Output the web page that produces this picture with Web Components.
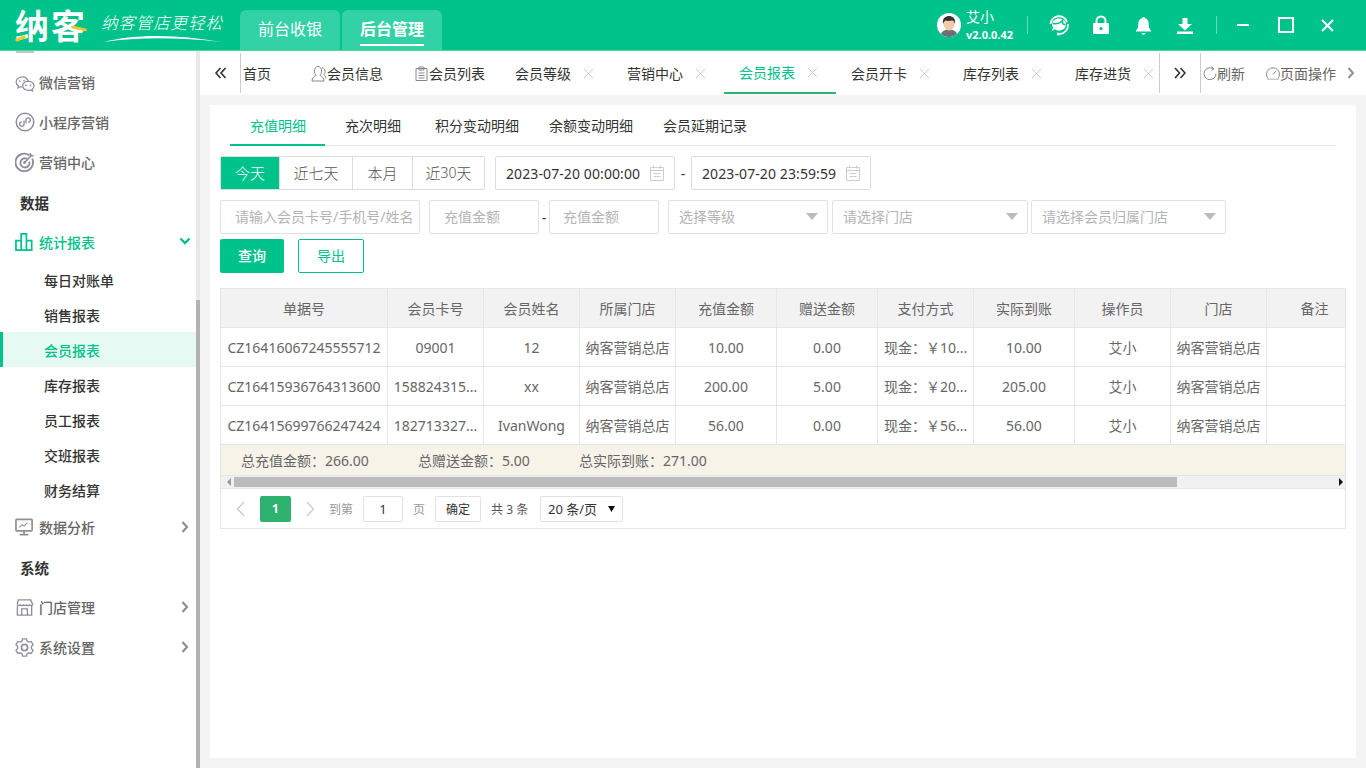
<!DOCTYPE html>
<html lang="zh-CN">
<head>
<meta charset="utf-8">
<title>纳客</title>
<style>
  html, body { margin: 0; height: 100%; overflow: hidden; background: #fff; }
  body { font-family: "Noto Sans", "Noto Sans CJK SC", sans-serif; font-size: 14px; }
</style>
</head>
<body>
<app-shell>
  <app-header slot="header"></app-header>
  <side-nav slot="side">
    <side-item icon="wechat">微信营销</side-item>
    <side-item icon="mini">小程序营销</side-item>
    <side-item icon="target">营销中心</side-item>
    <side-title>数据</side-title>
    <side-item icon="chart" open>统计报表</side-item>
    <side-sub>每日对账单</side-sub>
    <side-sub>销售报表</side-sub>
    <side-sub active>会员报表</side-sub>
    <side-sub>库存报表</side-sub>
    <side-sub>员工报表</side-sub>
    <side-sub>交班报表</side-sub>
    <side-sub>财务结算</side-sub>
    <side-item icon="monitor" arrow>数据分析</side-item>
    <side-title>系统</side-title>
    <side-item icon="store" arrow>门店管理</side-item>
    <side-item icon="gear" arrow>系统设置</side-item>
  </side-nav>
  <tab-strip slot="tabs"></tab-strip>
  <report-panel slot="main"></report-panel>
</app-shell>

<script>
const GREEN = '#00c28b';

const ICONS = {
  wechat: '<path d="M14 10.500c-.6-3.600-3-5.500-6.200-5.500C4.200 5 1.200 7.400 1.200 10.400c0 1.800 1 3.300 2.500 4.300l-.6 2 2.500-1.200c.8.200 1.500.3 2.300.3" /><path d="M14 9.500c3.300 0 6 2.200 6 5 0 1.500-.8 2.800-2 3.700l.5 1.800-2.300-1.100c-.8.200-1.400.4-2.200.4-3.300 0-6-2.200-6-4.800s2.700-5 6-5z"/><circle cx="11.500" cy="14" r="1" fill="currentColor" stroke="none"/><circle cx="16.200" cy="14" r="1" fill="currentColor" stroke="none"/><circle cx="5" cy="9.500" r=".9" fill="currentColor" stroke="none"/><circle cx="9.500" cy="9" r=".9" fill="currentColor" stroke="none"/>',
  mini: '<circle cx="10.500" cy="10.500" r="9.200" stroke-width="1.600"/><path d="M9.500 8.800v3.800a2.300 2.300 0 1 1-2.300-2.300M11.500 12.200V8.400a2.300 2.300 0 1 1 2.300 2.300" stroke-width="1.400"/>',
  target: '<path d="M14.800 3.300A9.200 9.200 0 1 0 18 7" stroke-width="2"/><path d="M12.800 7.300a4.800 4.800 0 1 0 2.200 2.800" stroke-width="2"/><circle cx="10" cy="11" r="1.600" fill="currentColor" stroke="none"/><path d="M10 11 18 3M16 1v3h3.500" stroke-width="1.600"/>',
  chart: '<path d="M1 9h5.500v10H1zM6.500 2h5.500v17H6.500zM12 9h5.500v10H12z" stroke-width="1.800"/>',
  monitor: '<rect x="1" y="2.500" width="17" height="12" rx=".8" stroke-width="1.800"/><path d="M4.500 11l3-3 2 1.500 3.500-3.500" stroke-width="1.100"/><path d="M9.500 14.500v3.500M5 18.500h9" stroke-width="1.800"/>',
  store: '<path d="M3.500 3h13l2 4.500c0 2-3 2-3 0 0 2-3.300 2-3.300 0 0 2-3.400 2-3.400 0 0 2-3.300 2-3.300 0 0 2-3 2-3 0z" stroke-width="1.400"/><path d="M2.500 9.500V19h15V9.500M7 19V12.500h6V19" stroke-width="1.400"/>',
  gear: '<path d="M8 2h4l.7 2.400 1.900 1 2.400-.7 2 3.400-1.800 1.800v2.200l1.800 1.800-2 3.400-2.400-.7-1.900 1-.7 2.400H8l-.7-2.400-1.900-1-2.400.7-2-3.400 1.800-1.800V9.900L1 8.100l2-3.400 2.400.7 1.900-1z" stroke-width="1.400"/><circle cx="10" cy="11" r="3.200" stroke-width="1.800"/>',
};

function svg(d, w, h, vb, extra) {
  return `<svg width="${w}" height="${h}" viewBox="${vb}" ${extra || ''}>${d}</svg>`;
}

class Base extends HTMLElement {
  constructor() {
    super();
    this.attachShadow({ mode: 'open' });
    this.shadowRoot.innerHTML = this.render();
  }
}

class AppShell extends Base {
  render() { return `
    <style>
      :host { display: grid; width: 1366px; height: 768px; overflow: hidden;
        grid-template: 51px 44px 1fr / 200px 1fr; }
      .h { grid-column: 1 / 3; display: block; }
      .s { grid-row: 2 / 4; display: block; }
    </style>
    <slot class="h" name="header"></slot>
    <slot class="s" name="side"></slot>
    <slot name="tabs"></slot>
    <slot name="main"></slot>`; }
}

class AppHeader extends Base {
  render() { return `
    <style>
      :host { display: flex; align-items: stretch; height: 51px; box-sizing: border-box;
        background: ${GREEN}; border-bottom: 1px solid #4fdb92; color: #fff; }
      .logo { position: relative; width: 86px; margin-left: 15px; font-size: 34px; font-weight: 700;
        line-height: 52px; letter-spacing: 2px; white-space: nowrap; }
      .logo i { position: absolute; left: 0; top: 37px; width: 11px; height: 3px; background: #f7c531;
        border-radius: 2px; transform: rotate(-22deg); }
      .logo b { position: absolute; left: 56px; top: 27px; width: 16px; height: 3px; background: #f7c531;
        border-radius: 2px; transform: rotate(12deg); }
      .slogan { position: relative; width: 124px; flex: none; font-size: 16.500px; font-style: italic;
        font-weight: 300; line-height: 46px; white-space: nowrap; letter-spacing: .9px; }
      .slogan svg { position: absolute; left: 2px; top: 33px; }
      .top { width: 100px; margin-top: 10px; background: #33d2a6; border-radius: 6px 6px 0 0; margin-left: 2px;
        text-align: center; font-size: 16px; line-height: 39px; }
      .first { margin-left: 15px; }
      .top span { display: inline-block; height: 33px; line-height: 37px; }
      .top.on { font-weight: 700; }
      .top.on span { border-bottom: 2px solid #fff; }
      .right { margin-left: auto; display: flex; align-items: center; }
      .avatar { width: 24px; height: 24px; margin-left: 1px; margin-right: 5px; }
      .user { width: 61px; line-height: 1; padding-top: 2px; }
      .user div { font-size: 14px; }
      .user small { display: block; margin-top: 3px; font: 700 11px "Noto Sans", sans-serif; }
      .sep { width: 1px; height: 18px; background: #66dabb; }
      .ic { display: flex; justify-content: center; align-items: center; width: 42px; }
      .win { display: flex; justify-content: center; align-items: center; width: 42px; }
    </style>
    <div class="logo">纳客<i></i><b></b></div>
    <div class="slogan">纳客管店更轻松${svg('<path d="M1 9C30 1 75 1 118 9 75 4 35 4 1 9z" fill="#fff"/>', 120, 10, '0 0 120 10')}</div>
    <div class="top first"><span>前台收银</span></div>
    <div class="top on"><span>后台管理</span></div>
    <div class="right">
      ${svg(`<circle cx="12" cy="12" r="12" fill="#fff"/>
        <path d="M4 21c1.500-3.500 4.500-4.500 8-4.500s6.500 1 8 4.500a12 12 0 0 1-16 0z" fill="#6d7078"/>
        <ellipse cx="12" cy="11" rx="5.500" ry="6.500" fill="#f3c9a9"/>
        <path d="M6 11c-1-6 3-8 6-8s7 2 6 8c-.8-2.500-1.500-3.500-3-3.500-2 .6-5 .6-6.500 0C7.500 8 6.800 9 6 11z" fill="#3a3230"/>`, 24, 24, '0 0 24 24', 'class="avatar"')}
      <div class="user"><div>艾小</div><small>v2.0.0.42</small></div>
      <div class="sep"></div>
      <div class="ic" style="margin-left:10px">${svg(`<path d="M2.500 10a8.500 8.500 0 0 1 16.500-2" fill="none" stroke="#fff" stroke-width="2"/>
        <path d="M11 4.500c4 0 7 2.500 7 6s-3 6-7 6c-1.500 0-3-.4-4-1.200L3.500 17l1.800-3.500C4.500 12.800 4 12 4 10.500c0-3.500 3-6 7-6z" fill="#fff"/>
        <path d="M4.500 9.500c4 .5 8-.5 10-3 0 3 .3 4.500 3.200 4" fill="none" stroke="${GREEN}" stroke-width="1.500"/>
        <path d="M20 10a9 9 0 0 1-8 10" fill="none" stroke="#fff" stroke-width="1.600"/><circle cx="10.500" cy="20" r="1.600" fill="#fff"/>`, 22, 22, '0 0 22 22')}</div>
      <div class="ic">${svg(`<path d="M4.500 8V6a4.500 4.500 0 0 1 9 0v2" fill="none" stroke="#fff" stroke-width="2"/>
        <path fill-rule="evenodd" d="M2 8h14a1 1 0 0 1 1 1v9a1 1 0 0 1-1 1H2a1 1 0 0 1-1-1V9a1 1 0 0 1 1-1zm7 4a1.600 1.600 0 1 0 0 3.200A1.600 1.600 0 0 0 9 12z" fill="#fff"/>`, 18, 20, '0 0 18 20')}</div>
      <div class="ic">${svg(`<path d="M8.500 1c.8 0 1.300.5 1.400 1.300 2.700.7 3.800 3 3.800 5.700 0 3.500.7 5 2.300 6.500v1H1v-1C2.600 13 3.300 11.500 3.300 8c0-2.700 1.100-5 3.800-5.700C7.200 1.500 7.700 1 8.500 1zM6.300 17h4.400a2.300 2.300 0 0 1-4.400 0z" fill="#fff"/>`, 17, 19, '0 0 17 19')}</div>
      <div class="ic">${svg(`<path d="M5.500 1h5v6H15l-7 6.500L1 7h4.500zM0 14.500h16V17H0z" fill="#fff"/>`, 16, 17, '0 0 16 17')}</div>
      <div class="sep" style="margin:0 5px 0 10px"></div>
      <div class="win">${svg('<path d="M0 1h12" stroke="#fff" stroke-width="2"/>', 12, 2, '0 0 12 2')}</div>
      <div class="win" style="margin-left:1px">${svg('<rect x="1" y="1" width="14" height="14" fill="none" stroke="#fff" stroke-width="2"/>', 16, 16, '0 0 16 16')}</div>
      <div class="win" style="margin-right:18px;margin-left:-1px">${svg('<path d="M1 1l11 11M12 1 1 12" stroke="#fff" stroke-width="2"/>', 13, 13, '0 0 13 13')}</div>
    </div>`; }
}

class SideNav extends Base {
  render() { return `
    <style>
      :host { display: flex; width: 200px; height: 717px; overflow: hidden; background: #fff; }
      .list { width: 196px; box-sizing: border-box; }
      .cut { width: 18px; height: 2px; margin: 0 0 9px 16px; background: #c4c4c8; }
      .bar { width: 4px; display: flex; flex-direction: column; background: #e8e8e8; }
      .bar div { margin-top: 249px; flex: 1; background: #b2b2b2; }
    </style>
    <div class="list"><div class="cut"></div><slot></slot></div>
    <div class="bar"><div></div></div>`; }
}

class SideItem extends Base {
  render() {
    const icon = this.getAttribute('icon');
    const open = this.hasAttribute('open');
    const right = open
      ? svg(`<path d="M1.500 1.500 6 6l4.500-4.500" fill="none" stroke="${GREEN}" stroke-width="2.400"/>`, 12, 8, '0 0 12 8')
      : this.hasAttribute('arrow')
        ? svg('<path d="M1.500 1 6 6l-4.500 5" fill="none" stroke="#8f8f99" stroke-width="2.200"/>', 8, 12, '0 0 8 12')
        : '';
    return `
    <style>
      :host { display: flex; align-items: center; height: 40px; padding-left: 15px; color: ${open ? GREEN : '#666'};
        font-weight: 500; font-size: 14px; position: relative; }
      svg.i { width: 20px; height: 20px; margin-right: 4px; flex: none; fill: none; stroke: currentColor; stroke-width: 1.300;
        color: ${open ? GREEN : '#8f8f99'}; }
      .r { margin-left: auto; display: flex; width: 22px; justify-content: center; margin-right: 0; margin-top: ${open ? '-3px' : '0'}; }
    </style>
    <svg class="i" viewBox="0 0 21 21">${ICONS[icon]}</svg><slot></slot><div class="r">${right}</div>`;
  }
}

class SideTitle extends Base {
  render() { return `
    <style>:host { display: flex; align-items: center; height: 40px; padding-left: 20px; color: #333; font-weight: 700; font-size: 14.500px; }</style>
    <slot></slot>`; }
}

class SideSub extends Base {
  render() {
    const on = this.hasAttribute('active');
    return `
    <style>
      :host { display: flex; align-items: center; height: 35px; box-sizing: border-box; padding-left: ${on ? 41 : 44}px;
        font-weight: 500; font-size: 14px; color: ${on ? GREEN : '#333'}; background: ${on ? '#e7f9f3' : 'none'};
        border-left: ${on ? '3px solid ' + GREEN : '0'}; }
    </style><slot></slot>`;
  }
}

const X = svg('<path d="M1 1l9 9M10 1l-9 9" stroke="#ccc" stroke-width="1" fill="none"/>', 11, 11, '0 0 11 11');

class TabItem extends Base {
  render() {
    const on = this.hasAttribute('active');
    const closable = this.hasAttribute('closable');
    return `
    <style>
      :host { display: flex; align-items: center; flex: none; box-sizing: border-box; height: 44px; padding-bottom: ${on ? 2 : 0}px;
        font-size: 14px; color: ${on ? GREEN : '#333'}; position: relative; }
      :host([active])::after { content: ""; position: absolute; left: 0; right: 0; bottom: 1px; height: 2px; background: #2fb170; }
      .x { margin-left: 12px; display: flex; }
      ::slotted(svg) { flex: none; }
    </style>
    <slot name="icon"></slot><slot></slot>${closable ? `<span class="x">${X}</span>` : ''}`;
  }
}

class TabStrip extends Base {
  render() { return `
    <style>
      :host { display: flex; height: 44px; background: #fff; color: #333; align-items: center; }
      .btn { flex: none; width: 40px; height: 40px; display: flex; align-items: center; justify-content: center; }
      .line { flex: none; width: 1px; height: 40px; background: #ccc; }
      .list { flex: none; width: 918px; height: 44px; display: flex; overflow: hidden; }
      .w { width: 112px; padding-left: 15px; }
      .tool { display: flex; align-items: center; color: #666; font-size: 14px; flex: none; }
    </style>
    <div class="btn">${svg('<path d="M6.500 1 2 6 6.500 11M11.500 1 7 6 11.500 11" fill="none" stroke="#333" stroke-width="1.600"/>', 12, 12, '0 0 12 12')}</div>
    <div class="line"></div>
    <div class="list">
      <tab-item style="width:55px;padding-left:2px">首页</tab-item>
      <tab-item style="width:92px;padding-left:15px">
        <svg slot="icon" width="16" height="17" viewBox="0 0 16 17" fill="none" stroke="#888" stroke-width="1"><path d="M1 16c0-3 2-4.500 4-5.500C3.800 9 3.500 7.500 3.500 6c0-2.800 1.500-4.500 3.500-4.500S10.500 3.200 10.500 6c0 1.500-.4 3-1.500 4.500 2 1 4 2.500 4 5.500z"/><path d="M11 2.500c2 .5 3 2 3 4s-.5 2.800-1.200 3.500c1.200.7 2.200 1.800 2.200 3.500"/></svg>
        会员信息</tab-item>
      <tab-item style="width:112px;padding-left:26px">
        <svg slot="icon" width="15" height="15" viewBox="0 0 15 15" fill="none" stroke="#888" stroke-width="1"><path d="M2 2.500h11v12H2zM5 1h5v3H5zM4.500 7h6M4.500 9.500h6M4.500 12h6"/></svg>
        会员列表</tab-item>
      <tab-item class="w" closable>会员等级</tab-item>
      <tab-item class="w" closable>营销中心</tab-item>
      <tab-item class="w" closable active>会员报表</tab-item>
      <tab-item class="w" closable>会员开卡</tab-item>
      <tab-item class="w" closable>库存列表</tab-item>
      <tab-item class="w" closable>库存进货</tab-item>
    </div>
    <div class="line"></div>
    <div class="btn">${svg('<path d="M1 1 5.500 6 1 11M6.500 1 11 6l-4.500 5" fill="none" stroke="#333" stroke-width="1.600"/>', 12, 12, '0 0 12 12')}</div>
    <div class="line"></div>
    <div class="tool" style="margin-left:2px">${svg('<path d="M10 2.500A6 6 0 1 0 13 7.500" fill="none" stroke="#888" stroke-width="1"/><path d="M8.500 .8 11 2.800 8.500 4.600" fill="none" stroke="#888" stroke-width="1"/>', 14, 14, '0 0 14 14')}刷新</div>
    <div class="tool" style="margin-left:21px">${svg('<path d="M2 12.500A6.500 6.500 0 1 1 12 12.500" fill="none" stroke="#888" stroke-width="1"/><path d="M7 8.500l3-3.500" stroke="#888" stroke-width="1"/><path d="M1 12.500h12v1.500H1z" fill="#ccc"/>', 14, 15, '0 0 14 15')}页面操作</div>
    <div style="margin-left:11px;display:flex">${svg('<path d="M1.500 1 6 6l-4.500 5" fill="none" stroke="#8f8f99" stroke-width="2"/>', 8, 12, '0 0 8 12')}</div>`; }
}

class SubTabs extends Base {
  render() { return `
    <style>
      :host { display: flex; height: 41px; width: 1106px; margin-left: 10px; box-sizing: border-box; border-bottom: 1px solid #e6e6e6; font-size: 14px; color: #333; }
      div { line-height: 41px; white-space: nowrap; }
      .on { width: 95px; box-sizing: border-box; padding-left: 20px; color: ${GREEN}; border-bottom: 2px solid ${GREEN}; height: 41px; }
    </style>
    <div class="on">充值明细</div>
    <div style="margin-left:20px">充次明细</div>
    <div style="margin-left:34px">积分变动明细</div>
    <div style="margin-left:30px">余额变动明细</div>
    <div style="margin-left:30px">会员延期记录</div>`; }
}

class RangeButtons extends Base {
  render() { return `
    <style>
      :host { display: flex; height: 34px; box-sizing: border-box; border: 1px solid #ddd; border-radius: 2px; font-size: 15px; font-weight: 300; color: #555; }
      div { display: flex; align-items: center; justify-content: center; border-left: 1px solid #ddd; box-sizing: border-box; padding-bottom: 2px; }
      .on { background: ${GREEN}; color: #fff; border: 0; }
      small { font-size: 14px; }
    </style>
    <div class="on" style="width:58px">今天</div>
    <div style="width:73px">近七天</div>
    <div style="width:60px">本月</div>
    <div style="width:72px">近<small>30</small>天</div>`; }
}

class DateBox extends Base {
  render() { return `
    <style>
      :host { display: flex; align-items: center; width: 180px; height: 34px; box-sizing: border-box; border: 1px solid #ddd; border-radius: 2px;
        padding-left: 10px; color: #333; font-size: 14px; letter-spacing: .1px; white-space: nowrap; }
      svg { margin-left: auto; margin-right: 10px; flex: none; }
    </style>
    <slot></slot>
    ${svg('<path d="M.5 2.500h13v13H.5zM.5 5.500h13M3.500 .5v3M10.500 .5v3M3.500 8.500h7M3.500 11.500h7" fill="none" stroke="#ccc" stroke-width="1"/>', 14, 16, '0 0 14 16')}`; }
}

class FieldBox extends Base {
  render() {
    const w = this.getAttribute('w');
    const select = this.hasAttribute('select');
    return `
    <style>
      :host { display: flex; align-items: center; width: ${w}px; height: 34px; box-sizing: border-box; border: 1px solid #e2e2e2; border-radius: 2px;
        padding-left: ${this.getAttribute('pad') || 10}px; padding-bottom: 2px; color: #b4b4b4; font-size: 14px; white-space: nowrap; overflow: hidden; flex: none; }
      svg { margin-left: auto; margin-right: 9px; flex: none; }
    </style>
    <slot></slot>${select ? svg('<path d="M0 0h12L6 7z" fill="#bbb"/>', 12, 7, '0 0 12 7') : ''}`;
  }
}

class ReportTable extends Base {
  render() {
    const heads = ['单据号', '会员卡号', '会员姓名', '所属门店', '充值金额', '赠送金额', '支付方式', '实际到账', '操作员', '门店', '备注'];
    const rows = [
      ['CZ16416067245555712', '09001', '12', '纳客营销总店', '10.00', '0.00', '现金：￥10...', '10.00', '艾小', '纳客营销总店', ''],
      ['CZ16415936764313600', '158824315...', 'xx', '纳客营销总店', '200.00', '5.00', '现金：￥20...', '205.00', '艾小', '纳客营销总店', ''],
      ['CZ16415699766247424', '182713327...', 'IvanWong', '纳客营销总店', '56.00', '0.00', '现金：￥56...', '56.00', '艾小', '纳客营销总店', ''],
    ];
    const head = heads.map(h => `<div class="c th">${h}</div>`).join('');
    const body = rows.map(r => r.map((t, i) => `<div class="c${i === 6 ? ' left' : ''}">${t}</div>`).join('')).join('');
    return `
    <style>
      :host { display: block; width: 1126px; box-sizing: border-box; border: 1px solid #e6e6e6; color: #666; font-size: 14px; overflow: hidden; }
      .grid { display: grid; grid-template-columns: 167px 96px 96px 96px 101px 101px 96px 101px 96px 96px 96px; grid-auto-rows: 39px; }
      .c { display: flex; align-items: center; justify-content: center; box-sizing: border-box; border-right: 1px solid #e6e6e6; border-bottom: 1px solid #e6e6e6; white-space: nowrap; overflow: hidden; }
      .th { background: #f2f2f2; }
      .left { justify-content: flex-start; padding-left: 6px; }
      .sum { display: flex; align-items: center; height: 30px; background: #f7f3e9; padding-left: 20px; }
      .sum span { white-space: nowrap; }
      .scroll { display: flex; align-items: center; height: 14px; box-sizing: border-box; background: #f1f1f1; border-top: 1px solid #e6e6e6; border-bottom: 1px solid #e6e6e6; }
      .thumb { width: 943px; height: 10px; margin-left: 1px; background: #bcbcbc; }
      .arrow { width: 8px; display: flex; justify-content: center; }
      .arrow.r { margin-left: auto; }
    </style>
    <div class="grid">${head}${body}</div>
    <div class="sum"><span style="width:177px">总充值金额：266.00</span><span style="width:161px">总赠送金额：5.00</span><span>总实际到账：271.00</span></div>
    <div class="scroll">
      <div class="arrow" style="margin-left:4px">${svg('<path d="M4 0v8L0 4z" fill="#999"/>', 4, 8, '0 0 4 8')}</div>
      <div class="thumb"></div>
      <div class="arrow r">${svg('<path d="M0 0v8l4-4z" fill="#111"/>', 4, 8, '0 0 4 8')}</div>
    </div>
    <pager-bar></pager-bar>`;
  }
}

class PagerBar extends Base {
  render() { return `
    <style>
      :host { display: flex; align-items: center; height: 39px; padding-left: 15px; font-size: 12px; color: #999; white-space: nowrap; }
      .cur { width: 31px; height: 26px; margin: 0 0 0 15px; background: #2fb170; color: #fff; border-radius: 2px; display: flex; align-items: center; justify-content: center; font-weight: 700; }
      .box { height: 26px; box-sizing: border-box; border: 1px solid #e2e2e2; border-radius: 2px; display: flex; align-items: center; justify-content: center; color: #333; }
      .dark { color: #555; }
    </style>
    ${svg('<path d="M8 1 1.500 8 8 15" fill="none" stroke="#ccc" stroke-width="1.300"/>', 9, 16, '0 0 9 16')}
    <div class="cur">1</div>
    <span style="margin-left:15px;display:flex">${svg('<path d="M1 1l6.500 7L1 15" fill="none" stroke="#ccc" stroke-width="1.300"/>', 9, 16, '0 0 9 16')}</span>
    <span style="margin-left:14px">到第</span>
    <div class="box" style="width:40px;margin-left:10px;font-size:13px">1</div>
    <span style="margin-left:10px">页</span>
    <div class="box" style="width:46px;margin-left:10px">确定</div>
    <span class="dark" style="margin-left:10px;width:39px">共 3 条</span>
    <div class="box" style="width:83px;margin-left:10px;justify-content:flex-start;padding-left:7px;font-size:13px">20 条/页
      ${svg('<path d="M0 0h7L3.500 6z" fill="#111"/>', 7, 6, '0 0 7 6', 'style="margin-left:auto;margin-right:7px"')}</div>`; }
}

class ReportPanel extends Base {
  render() { return `
    <style>
      :host { display: block; background: #f4f4f4; padding: 10px; height: 673px; box-sizing: border-box; }
      .paper { height: 100%; background: #fff; box-sizing: border-box; padding-left: 10px; }
      .row { display: flex; align-items: center; }
      .dash { width: 16px; text-align: center; color: #333; flex: none; }
      .btn { height: 34px; box-sizing: border-box; display: flex; align-items: center; justify-content: center; border-radius: 2px; font-size: 14px; padding-bottom: 2px; }
    </style>
    <div class="paper">
      <sub-tabs></sub-tabs>
      <div class="row" style="margin-top:10px">
        <range-buttons></range-buttons>
        <date-box style="margin-left:10px">2023-07-20 00:00:00</date-box>
        <div class="dash">-</div>
        <date-box>2023-07-20 23:59:59</date-box>
      </div>
      <div class="row" style="margin-top:10px">
        <field-box w="200" pad="14">请输入会员卡号/手机号/姓名</field-box>
        <field-box w="110" pad="14" style="margin-left:9px">充值金额</field-box>
        <div style="width:10px;text-align:center;color:#333">-</div>
        <field-box w="110" pad="13">充值金额</field-box>
        <field-box w="160" select style="margin-left:9px">选择等级</field-box>
        <field-box w="196" select style="margin-left:4px">请选择门店</field-box>
        <field-box w="195" select style="margin-left:3px">请选择会员归属门店</field-box>
      </div>
      <div class="row" style="margin-top:5px">
        <div class="btn" style="width:64px;background:${GREEN};color:#fff;font-weight:500">查询</div>
        <div class="btn" style="width:66px;margin-left:14px;border:1px solid ${GREEN};color:${GREEN}">导出</div>
      </div>
      <report-table style="margin-top:15px"></report-table>
    </div>`; }
}

customElements.define('app-shell', AppShell);
customElements.define('app-header', AppHeader);
customElements.define('side-nav', SideNav);
customElements.define('side-item', SideItem);
customElements.define('side-title', SideTitle);
customElements.define('side-sub', SideSub);
customElements.define('tab-item', TabItem);
customElements.define('tab-strip', TabStrip);
customElements.define('sub-tabs', SubTabs);
customElements.define('range-buttons', RangeButtons);
customElements.define('date-box', DateBox);
customElements.define('field-box', FieldBox);
customElements.define('pager-bar', PagerBar);
customElements.define('report-table', ReportTable);
customElements.define('report-panel', ReportPanel);
</script>
</body>
</html>
